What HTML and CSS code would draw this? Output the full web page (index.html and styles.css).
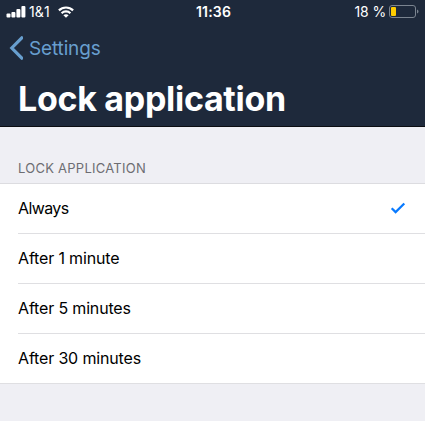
FILE: index.html
```html
<!DOCTYPE html>
<html lang="en">
<head>
<meta charset="utf-8">
<title>Lock application</title>
<link rel="stylesheet" href="styles.css">
</head>
<body>
<header class="header">
  <div class="status">
    <div class="carrier">
      <svg class="signal" width="20" height="12" viewBox="0 0 20 12"><rect x="0.5" y="7.5" width="4" height="4" rx="1"/><rect x="5.4" y="6" width="4" height="5.5" rx="1"/><rect x="10.4" y="3" width="4" height="8.5" rx="1"/><rect x="15.4" y="0" width="4" height="11.5" rx="1"/></svg>
      <span class="carrier-name">1&amp;1</span>
      <svg class="wifi" width="16" height="12" viewBox="0 0 16 12"><path d="M.9 4.4c4-3.9 10.2-3.9 14.2 0M3.6 7.2c2.5-2.4 6.3-2.4 8.8 0"/><path class="dot" d="M8 11.8 5.4 9.2c1.5-1.3 3.7-1.3 5.2 0z"/></svg>
    </div>
    <div class="time">11:36</div>
    <div class="power">
      <span class="percent">18 %</span>
      <svg class="battery" width="30" height="14" viewBox="0 0 30 14"><rect class="shell" x=".5" y=".5" width="26" height="12" rx="2.5"/><rect class="charge" x="2" y="2" width="5" height="9" rx="1"/><path class="cap" d="M28 4.5c2 .7 2 3.3 0 4z"/></svg>
    </div>
  </div>
  <nav class="back"><svg class="chevron" width="14" height="24" viewBox="0 0 14 24"><path d="M12.8 1.8 2.8 12l10 10.2"/></svg><span class="back-label">Settings</span></nav>
  <h1 class="title"><span>Lock application</span></h1>
</header>
<main>
  <h2 class="section">LOCK APPLICATION</h2>
  <ul class="list">
    <li class="row"><span class="always">Always</span><svg class="check" width="16" height="12" viewBox="0 0 16 12"><path d="M1.7 6.2 5.6 10.1 14.3 1.5"/></svg></li>
    <li class="row"><span>After 1 minute</span></li>
    <li class="row"><span>After 5 minutes</span></li>
    <li class="row"><span>After 30 minutes</span></li>
  </ul>
</main>
</body>
</html>
```

FILE: styles.css
```css
* { box-sizing: border-box; }
body { margin: 0; background: #efeff4; font-family: Inter, "Liberation Sans", sans-serif; color: #000; }
svg { display: block; flex: none; }
.header { height: 127px; background: #1e293b; color: #fff; border-bottom: 1px solid #0b0d12; }
.status { height: 24px; padding: 0 6px 1px; display: grid; grid-template-columns: 1fr auto 1fr; align-items: center; font-size: 14px; }
.carrier, .power { display: flex; align-items: center; }
.power { justify-content: flex-end; gap: 3px; }
.signal, .dot { fill: #fff; }
.carrier-name { width: 22px; margin: 0 7px 0 3px; letter-spacing: .1px; white-space: nowrap; }
.wifi { fill: none; stroke: #fff; stroke-width: 2.2; }
.wifi .dot { stroke: none; }
.percent { letter-spacing: -.15px; }
.time { padding-left: 2px; font-weight: 600; letter-spacing: .2px; }
.shell { fill: none; stroke: #7b8490; }
.charge { fill: #fc0; }
.cap { fill: #7b8490; }
.back { height: 48px; padding-left: 9px; display: flex; align-items: center; gap: 6px; color: #689fcf; font-size: 19px; letter-spacing: -.15px; }
.chevron { fill: none; stroke: #689fcf; stroke-width: 3.2; stroke-linecap: round; }
.title { margin: 0; padding: 5px 0 0 18px; font-size: 34px; line-height: 44px; font-weight: 700; letter-spacing: -.3px; }
.section { margin: 0; height: 56px; padding: 32px 0 0 18px; color: #6d6d72; font-size: 13px; line-height: 18px; font-weight: 400; letter-spacing: .25px; }
.list { margin: 0; padding: 0; list-style: none; background: #fff; border-top: 1px solid #dcdce0; }
.row { height: 50px; margin-left: 18px; padding: 0 19px 1px 0; display: flex; align-items: center; justify-content: space-between; border-bottom: 1px solid #dfdfe2; font-size: 16px; letter-spacing: -.16px; }
.row:last-child { margin-left: 0; padding-left: 18px; }
.always { letter-spacing: -.6px; }
.check { fill: none; stroke: #087aff; stroke-width: 2.2; }
```
